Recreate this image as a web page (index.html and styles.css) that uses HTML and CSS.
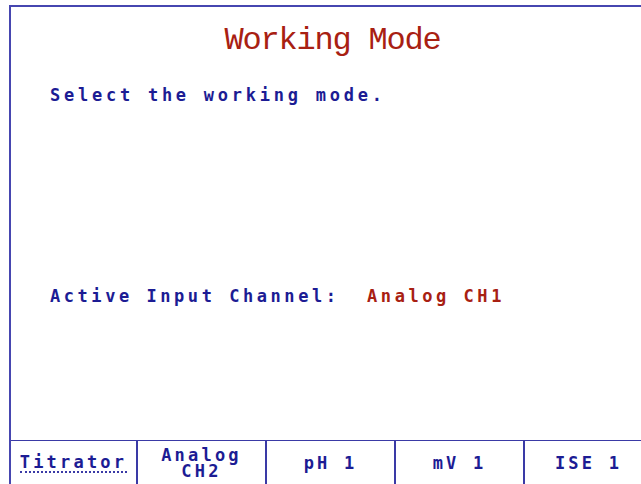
FILE: index.html
```html
<!DOCTYPE html>
<html lang="en">

<head>
    <meta charset="UTF-8">
    <meta name="viewport" content="width=device-width, initial-scale=1">
    <title>Working Mode</title>
    <link rel="stylesheet" href="styles.css">
</head>
<body>
    <div class="screen">
        <main class="content">
            <h1 class="title">Working Mode</h1>
            <p class="prompt">Select the working mode.</p>
            <p class="channel">Active Input Channel:  <span class="value">Analog CH1</span></p>
        </main>

        <nav class="softkeys">
            <div class="key"><span class="selected">Titrator</span></div>
            <div class="key">Analog<br>CH2</div>
            <div class="key">pH 1</div>
            <div class="key">mV 1</div>
            <div class="key">ISE 1</div>
        </nav>
    </div>
</body>
</html>
```

FILE: styles.css
```css
html, body {
    margin: 0;
    height: 100%;
    overflow: hidden;
    background: white;
}

body {
    font-family: "DejaVu Sans Mono", "Liberation Mono", monospace;
    color: #1c1c94;
}

.screen {
    margin: 5px 0 0 9px;
    width: 643px;
    height: 500px;
    border-top: 2px solid #4646b0;
    border-left: 2px solid #4646b0;
    display: flex;
    flex-direction: column;
}

.content {
    height: 433px;
    padding: 0 0 0 39px;
}

.title {
    margin: 18px 0 0 -39px;
    font-family: "Liberation Mono", monospace;
    font-size: 32px;
    font-weight: normal;
    letter-spacing: -1.2px;
    line-height: 32px;
    text-align: center;
    color: #a82012;
}

.prompt {
    margin: 28px 0 0;
    font-size: 17px;
    letter-spacing: 3.75px;
    line-height: 20px;
    font-weight: bold;
}

.channel {
    margin: 181px 0 0;
    font-size: 17px;
    letter-spacing: 3.55px;
    line-height: 20px;
    font-weight: bold;
    white-space: pre;
}

.value {
    color: #a82012;
}

.softkeys {
    display: grid;
    grid-template-columns: 127px repeat(4, 129px);
    height: 60px;
    border-top: 1px solid #3a3aa6;
}

.key {
    border-right: 2px solid #3a3aa6;
    font-size: 17px;
    font-weight: bold;
    letter-spacing: 3.2px;
    line-height: 16px;
    text-align: center;
    height: 44px;
    display: flex;
    align-items: center;
    justify-content: center;
}

.selected {
    border-bottom: 2px dotted #3a3aa6;
    padding-bottom: 1px;
}
```
